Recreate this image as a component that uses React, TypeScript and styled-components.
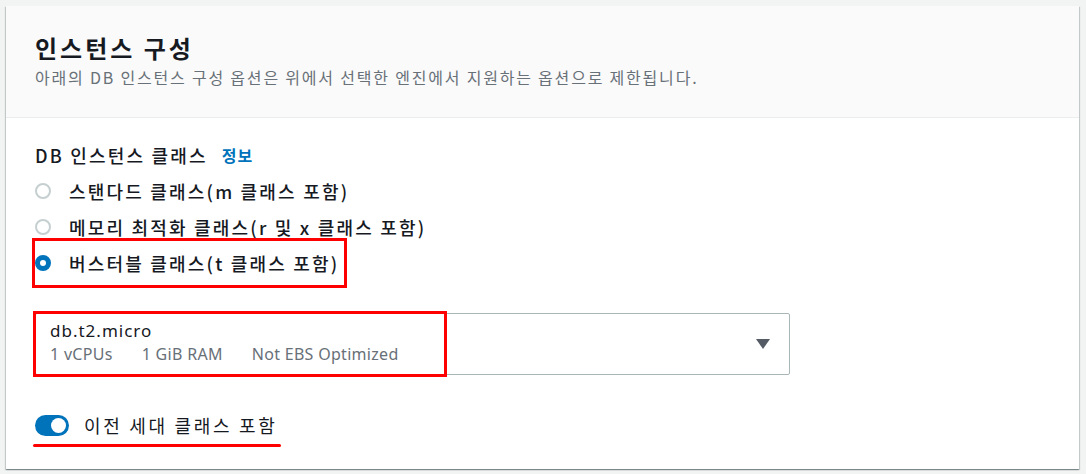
import React from 'react';
import styled, { createGlobalStyle } from 'styled-components';

const GlobalStyle = createGlobalStyle`
  html, body {
    margin: 0;
    padding: 0;
    background: #f2f3f3;
  }
  body {
    font-family: 'Noto Sans', 'Noto Sans CJK KR', sans-serif;
    color: #16191f;
  }
`;

const Page = styled.div`
  padding: 6px 7px 6px 6px;
`;

const Card = styled.section`
  background: #fff;
  box-shadow: 0 1px 1px 0 rgba(0, 28, 36, 0.3), 1px 1px 1px 0 rgba(0, 28, 36, 0.15),
    -1px 1px 1px 0 rgba(0, 28, 36, 0.15);
`;

const Header = styled.header`
  background: #fafafa;
  border-bottom: 1px solid #eaeded;
  padding: 27px 29px 30px;
`;

const Title = styled.h2`
  margin: 0;
  font-family: 'Noto Sans CJK KR', sans-serif;
  font-size: 24px;
  font-weight: 700;
  line-height: 30px;
  letter-spacing: 3px;
`;

const Description = styled.p`
  margin: 4px 0 0;
  font-family: 'Noto Sans CJK KR', sans-serif;
  font-size: 16px;
  line-height: 20px;
  letter-spacing: 1.8px;
  color: #687078;
`;

const Body = styled.div`
  padding: 19px 29px 22px;
`;

const FieldLabel = styled.div`
  display: flex;
  align-items: center;
  height: 36px;
  font-family: 'Noto Sans CJK KR', sans-serif;
  font-size: 18px;
  font-weight: 500;
  letter-spacing: 2.2px;
`;

const InfoLink = styled.a`
  margin-left: 14px;
  color: #0073bb;
  font-size: 16px;
  font-weight: 700;
  letter-spacing: 1px;
  text-decoration: none;
`;

const Option = styled.label<{ $marked?: boolean }>`
  display: flex;
  align-items: center;
  width: fit-content;
  height: 36px;
  gap: 18px;
  font-family: 'Noto Sans CJK KR', sans-serif;
  font-size: 18px;
  font-weight: 500;
  letter-spacing: 2.2px;
  padding: ${(p) => (p.$marked ? '4px 5px 4px 0' : '0')};
  margin: ${(p) => (p.$marked ? '-4px 0' : '0')};
  outline: ${(p) => (p.$marked ? '3px solid #ff0000' : 'none')};
`;

const Radio = styled.span<{ $checked?: boolean }>`
  box-sizing: border-box;
  width: 16px;
  height: 16px;
  border-radius: 50%;
  background: #fff;
  border: ${(p) => (p.$checked ? '5px solid #0073bb' : '2px solid #c6cfd0')};
`;

const Select = styled.div`
  display: flex;
  align-items: center;
  margin-top: 32px;
  width: 755px;
  height: 62px;
  box-sizing: border-box;
  border: 1px solid #aab7b8;
  border-radius: 2px;
`;

const SelectValue = styled.div`
  box-sizing: border-box;
  width: 408px;
  height: 100%;
  padding: 5px 14px;
  outline: 3px solid #ff0000;
  outline-offset: 0;
`;

const ValueName = styled.div`
  font-size: 17px;
  line-height: 24px;
  letter-spacing: 1px;
  color: #16191f;
`;

const ValueMeta = styled.div`
  display: flex;
  gap: 29px;
  font-size: 16px;
  line-height: 22px;
  letter-spacing: 0.3px;
  color: #687078;
`;

const Caret = styled.span`
  margin-left: auto;
  margin-right: 19px;
  width: 0;
  height: 0;
  border-left: 7px solid transparent;
  border-right: 7px solid transparent;
  border-top: 10px solid #545b64;
`;

const ToggleRow = styled.div`
  display: flex;
  align-items: center;
  gap: 15px;
  margin-top: 38px;
  height: 24px;
  font-family: 'Noto Sans CJK KR', sans-serif;
  font-size: 18px;
  letter-spacing: 2.7px;
`;

const Toggle = styled.span`
  box-sizing: border-box;
  display: flex;
  justify-content: flex-end;
  align-items: center;
  width: 34px;
  height: 21px;
  padding: 0 3px;
  border-radius: 11px;
  background: #0073bb;

  &::after {
    content: '';
    width: 15px;
    height: 15px;
    border-radius: 50%;
    background: #fff;
  }
`;

const Underline = styled.div`
  margin: 7px 0 0 -2px;
  width: 248px;
  height: 3px;
  border-radius: 2px;
  background: #ff0000;
`;

const App = () => {
  return (
    <Page>
      <GlobalStyle />
      <Card>
        <Header>
          <Title>인스턴스 구성</Title>
          <Description>
            아래의 DB 인스턴스 구성 옵션은 위에서 선택한 엔진에서 지원하는 옵션으로 제한됩니다.
          </Description>
        </Header>
        <Body>
          <FieldLabel>
            DB 인스턴스 클래스
            <InfoLink>정보</InfoLink>
          </FieldLabel>
          <Option>
            <Radio />
            스탠다드 클래스(m 클래스 포함)
          </Option>
          <Option>
            <Radio />
            메모리 최적화 클래스(r 및 x 클래스 포함)
          </Option>
          <Option $marked>
            <Radio $checked />
            버스터블 클래스(t 클래스 포함)
          </Option>
          <Select>
            <SelectValue>
              <ValueName>db.t2.micro</ValueName>
              <ValueMeta>
                <span>1 vCPUs</span>
                <span>1 GiB RAM</span>
                <span>Not EBS Optimized</span>
              </ValueMeta>
            </SelectValue>
            <Caret />
          </Select>
          <ToggleRow>
            <Toggle />
            이전 세대 클래스 포함
          </ToggleRow>
          <Underline />
        </Body>
      </Card>
    </Page>
  );
};

export default App;
